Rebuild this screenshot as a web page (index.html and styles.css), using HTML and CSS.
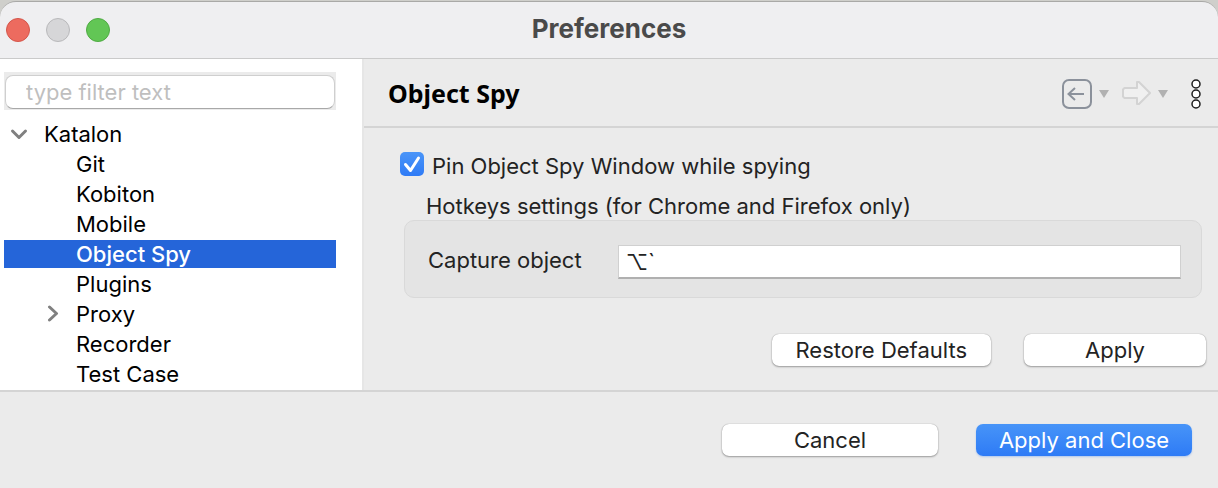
FILE: index.html
```html
<!DOCTYPE html>
<html lang="en">
<head>
<meta charset="utf-8">
<title>Preferences</title>
<link rel="stylesheet" href="styles.css">
</head>
<body>
<div class="window">
  <header class="titlebar">
    <div class="lights">
      <button class="light light-close" aria-label="Close"></button>
      <button class="light light-min" aria-label="Minimize"></button>
      <button class="light light-zoom" aria-label="Zoom"></button>
    </div>
    <h1 class="title">Preferences</h1>
  </header>
  <div class="body">
    <nav class="sidebar">
      <div class="filter"><input class="filter-input" type="text" placeholder="type filter text" aria-label="type filter text"></div>
      <ul class="tree">
        <li class="row root"><svg class="chevron" viewBox="0 0 18 18"><path d="M2.500 6 9 12.500 15.500 6"/></svg><a href="#katalon">Katalon</a></li>
        <li class="row"><a href="#git">Git</a></li>
        <li class="row"><a href="#kobiton">Kobiton</a></li>
        <li class="row"><a href="#mobile">Mobile</a></li>
        <li class="row selected"><a href="#object-spy">Object Spy</a></li>
        <li class="row"><a href="#plugins">Plugins</a></li>
        <li class="row branch"><svg class="chevron" viewBox="0 0 18 18"><path d="m5.500 2 7 6.500-7 6.500"/></svg><a href="#proxy">Proxy</a></li>
        <li class="row"><a href="#recorder">Recorder</a></li>
        <li class="row"><a href="#test-case">Test Case</a></li>
      </ul>
    </nav>
    <main class="page">
      <div class="page-head">
        <h2 class="page-title">Object Spy</h2>
        <div class="tools">
          <button class="tool" aria-label="Back"><svg width="32" height="32" viewBox="0 0 32 32"><rect x="2" y="3" width="28" height="28" rx="6" fill="none" stroke="#8b919b" stroke-width="2"/><path d="M23 17H8M14 11l-6.500 6 6.500 6" fill="none" stroke="#8b919b" stroke-width="2"/></svg></button>
          <button class="tool" aria-label="Back history"><svg width="10" height="10" viewBox="0 0 10 10"><path d="M0 2h10L5 10z" fill="#b1b1b1"/></svg></button>
          <button class="tool forward" aria-label="Forward"><svg width="30" height="26" viewBox="0 0 30 26"><path d="M2.500 8H15V2h2l11 11-11 11h-2v-6H2.500L1 16.500v-7z" fill="#f0f0f0" stroke="#d3d3d3" stroke-width="2" stroke-linejoin="round"/></svg></button>
          <button class="tool" aria-label="Forward history"><svg width="10" height="10" viewBox="0 0 10 10"><path d="M0 2h10L5 10z" fill="#b1b1b1"/></svg></button>
          <button class="tool more" aria-label="View menu"><svg width="10" height="32" viewBox="0 0 10 32"><g fill="#fff" stroke="#1c1c1c" stroke-width="1.500"><circle cx="5" cy="7" r="4"/><circle cx="5" cy="17" r="4"/><circle cx="5" cy="27" r="4"/></g></svg></button>
        </div>
      </div>
      <div class="page-body">
        <label class="check"><input class="checkbox" type="checkbox" checked>Pin Object Spy Window while spying</label>
        <section class="group" aria-labelledby="hotkeys">
          <h3 class="group-title" id="hotkeys">Hotkeys settings (for Chrome and Firefox only)</h3>
          <div class="group-box">
            <label class="field-label" for="capture">Capture object</label>
            <input class="hotkey" id="capture" type="text" value="⌥`">
          </div>
        </section>
        <div class="page-actions">
          <button class="btn">Restore Defaults</button>
          <button class="btn btn-apply">Apply</button>
        </div>
      </div>
    </main>
  </div>
  <footer class="footer">
    <button class="btn btn-wide">Cancel</button>
    <button class="btn btn-wide btn-primary">Apply and Close</button>
  </footer>
</div>
</body>
</html>
```
FILE: styles.css
```css
* { box-sizing: border-box; }
body {
  margin: 0;
  background: #cfcfcb;
  color: #232323;
  font: 22px/28px Inter, "Liberation Sans", sans-serif;
}
button, input { font: inherit; color: inherit; }
button { padding: 0; border: 0; background: none; }
h1, h2, h3, ul { margin: 0; padding: 0; }

.window {
  display: flex;
  flex-direction: column;
  min-height: 100vh;
  border-top: 1px solid #cfcfcb;
  background: #cfcfcb;
}
.titlebar {
  display: grid;
  grid-template-columns: 1fr auto 1fr;
  align-items: center;
  height: 58px;
  padding: 0 6px;
  border-top: 1px solid #a9a9a7;
  border-bottom: 1px solid #cacaca;
  border-radius: 16px 16px 0 0;
  background: #efeff1;
}
.lights { display: flex; gap: 16px; }
.light { width: 24px; height: 24px; border: 1px solid; border-radius: 50%; }
.light-close { background: #ed6b5f; border-color: #d4564b; }
.light-min { background: #d6d6d8; border-color: #b9b9bb; }
.light-zoom { background: #62c655; border-color: #4fab43; }
.title { padding-bottom: 2px; color: #4a4a4a; font-size: 26px; font-weight: 700; line-height: 32px; }

.body { flex: 1; display: flex; background: #ebebeb; }
.sidebar {
  flex: 0 0 364px;
  padding: 13px 26px 0 4px;
  border-right: 2px solid #e6e6e6;
  background: #fff;
}
.filter { padding: 3px 1px 1px; background: #ebebeb; }
.filter-input {
  display: block;
  width: 100%;
  height: 34px;
  padding: 0 20px;
  border: 1px solid #cfcfcf;
  border-bottom-color: #a8a8a8;
  border-radius: 8px;
  background: #fff;
}
.filter-input::placeholder { color: #bfbfbf; opacity: 1; }
.tree { display: grid; gap: 2px; margin-top: 10px; list-style: none; color: #000; }
.row { display: flex; align-items: center; height: 28px; padding-left: 72px; }
.row a { color: inherit; text-decoration: none; }
.root { gap: 16px; padding-left: 6px; }
.branch { gap: 14px; padding-left: 40px; }
.selected { background: #2565d9; color: #fff; font-weight: 500; }
.chevron { width: 18px; height: 18px; fill: none; stroke: #808080; stroke-width: 3; stroke-linecap: round; stroke-linejoin: round; }

.page { flex: 1; min-width: 0; }
.page-head {
  display: flex;
  align-items: center;
  justify-content: space-between;
  height: 69px;
  padding: 0 17px 0 24px;
  border-bottom: 2px solid #d4d4d4;
}
.page-title { color: #000; font: 700 25px/32px "Noto Sans", "Open Sans", sans-serif; }
.tools { display: flex; align-items: center; gap: 6px; }
.tool { display: flex; }
.forward { margin-left: 7px; }
.more { margin-left: 17px; }
.page-body { padding: 24px 12px 22px 36px; }
.check { display: flex; align-items: flex-start; gap: 8px; }
.checkbox {
  appearance: none;
  width: 24px;
  height: 24px;
  margin: 0;
  border-radius: 5px;
  background: url("data:image/svg+xml,%3Csvg xmlns='http://www.w3.org/2000/svg' viewBox='0 0 24 24'%3E%3Cpath d='m5.500 12.500 5 6L18.500 6' fill='none' stroke='white' stroke-width='3' stroke-linecap='round' stroke-linejoin='round'/%3E%3C/svg%3E"), linear-gradient(#4a95f8, #2f7bf6);
}
.group { margin: 12px 4px 0; }
.group-title { padding-left: 22px; font-size: 22px; font-weight: 400; line-height: 28px; }
.group-box {
  display: flex;
  align-items: flex-start;
  gap: 36px;
  padding: 24px 20px 18px 23px;
  border: 1px solid #d9d9d9;
  border-radius: 10px;
  background: #e4e4e4;
}
.field-label { line-height: 30px; }
.hotkey {
  flex: 1;
  min-width: 0;
  height: 34px;
  padding: 0 7px;
  border: 1px solid #d0d0d0;
  border-bottom: 2px solid #b0b0b0;
  background: #fff;
  font-family: Inter, "DejaVu Sans", sans-serif;
}
.page-actions { display: flex; justify-content: flex-end; gap: 33px; margin-top: 36px; }
.btn {
  height: 32px;
  padding: 0 24px;
  border-radius: 7px;
  background: #fff;
  box-shadow: 0 0 1px #00000060, 0 1px 2px #00000050;
}
.btn-apply { width: 182px; }
.btn-wide { width: 216px; }
.btn-primary { padding: 0; background: linear-gradient(#4794f8, #2e7bf6); box-shadow: 0 1px 2px #2e7bf650; color: #fff; }
.footer {
  display: flex;
  justify-content: flex-end;
  gap: 38px;
  padding: 32px 26px 32px;
  border-top: 2px solid #d4d4d4;
  background: #ebebeb;
}
```
